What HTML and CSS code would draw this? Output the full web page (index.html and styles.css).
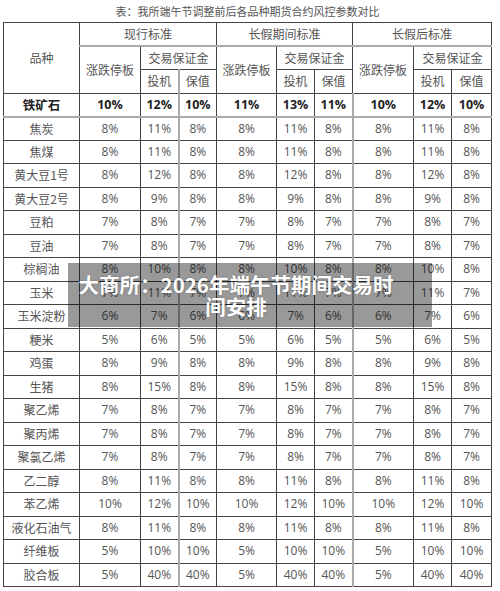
FILE: index.html
```html
<!DOCTYPE html>
<html lang="zh">

<head>
  <meta charset="UTF-8">
  <meta name="viewport" content="width=device-width, initial-scale=1.0">
  <title>风控参数对比</title>
  <link rel="stylesheet" href="styles.css">
</head>

<body>
  <div class="page">
    <div class="caption">表：我所端午节调整前后各品种期货合约风控参数对比</div>
    <table class="params">
      <colgroup>
        <col class="c-name">
        <col class="c-limit">
        <col class="c-m">
        <col class="c-m2">
        <col class="c-limit2">
        <col class="c-m">
        <col class="c-m2">
        <col class="c-limit">
        <col class="c-m">
        <col class="c-m3">
      </colgroup>
      <thead>
        <tr>
          <td rowspan="3">品种</td>
          <td colspan="3" class="grp">现行标准</td>
          <td colspan="3" class="grp">长假期间标准</td>
          <td colspan="3" class="grp">长假后标准</td>
        </tr>
        <tr>
          <td rowspan="2">涨跌停板</td>
          <td colspan="2">交易保证金</td>
          <td rowspan="2">涨跌停板</td>
          <td colspan="2">交易保证金</td>
          <td rowspan="2">涨跌停板</td>
          <td colspan="2">交易保证金</td>
        </tr>
        <tr>
          <td>投机</td><td class="gl">保值</td>
          <td>投机</td><td>保值</td>
          <td>投机</td><td class="gl-thin">保值</td>
        </tr>
      </thead>
      <tbody>
        <tr class="bold"><td>铁矿石</td><td>10%</td><td>12%</td><td>10%</td><td>11%</td><td>13%</td><td>11%</td><td>10%</td><td>12%</td><td>10%</td></tr>
        <tr><td>焦炭</td><td>8%</td><td>11%</td><td>8%</td><td>8%</td><td>11%</td><td>8%</td><td>8%</td><td>11%</td><td>8%</td></tr>
        <tr><td>焦煤</td><td>8%</td><td>11%</td><td>8%</td><td>8%</td><td>11%</td><td>8%</td><td>8%</td><td>11%</td><td>8%</td></tr>
        <tr><td>黄大豆1号</td><td>8%</td><td>12%</td><td>8%</td><td>8%</td><td>12%</td><td>8%</td><td>8%</td><td>12%</td><td>8%</td></tr>
        <tr><td>黄大豆2号</td><td>8%</td><td>9%</td><td>8%</td><td>8%</td><td>9%</td><td>8%</td><td>8%</td><td>9%</td><td>8%</td></tr>
        <tr><td>豆粕</td><td>7%</td><td>8%</td><td>7%</td><td>7%</td><td>8%</td><td>7%</td><td>7%</td><td>8%</td><td>7%</td></tr>
        <tr><td>豆油</td><td>7%</td><td>8%</td><td>7%</td><td>7%</td><td>8%</td><td>7%</td><td>7%</td><td>8%</td><td>7%</td></tr>
        <tr><td>棕榈油</td><td>8%</td><td>10%</td><td>8%</td><td>8%</td><td>10%</td><td>8%</td><td>8%</td><td>10%</td><td>8%</td></tr>
        <tr><td>玉米</td><td>7%</td><td>11%</td><td>7%</td><td>7%</td><td>11%</td><td>7%</td><td>7%</td><td>11%</td><td>7%</td></tr>
        <tr><td>玉米淀粉</td><td>6%</td><td>7%</td><td>6%</td><td>6%</td><td>7%</td><td>6%</td><td>6%</td><td>7%</td><td>6%</td></tr>
        <tr><td>粳米</td><td>5%</td><td>6%</td><td>5%</td><td>5%</td><td>6%</td><td>5%</td><td>5%</td><td>6%</td><td>5%</td></tr>
        <tr><td>鸡蛋</td><td>8%</td><td>9%</td><td>8%</td><td>8%</td><td>9%</td><td>8%</td><td>8%</td><td>9%</td><td>8%</td></tr>
        <tr><td>生猪</td><td>8%</td><td>15%</td><td>8%</td><td>8%</td><td>15%</td><td>8%</td><td>8%</td><td>15%</td><td>8%</td></tr>
        <tr><td>聚乙烯</td><td>7%</td><td>8%</td><td>7%</td><td>7%</td><td>8%</td><td>7%</td><td>7%</td><td>8%</td><td>7%</td></tr>
        <tr><td>聚丙烯</td><td>7%</td><td>8%</td><td>7%</td><td>7%</td><td>8%</td><td>7%</td><td>7%</td><td>8%</td><td>7%</td></tr>
        <tr><td>聚氯乙烯</td><td>7%</td><td>8%</td><td>7%</td><td>7%</td><td>8%</td><td>7%</td><td>7%</td><td>8%</td><td>7%</td></tr>
        <tr><td>乙二醇</td><td>8%</td><td>11%</td><td>8%</td><td>8%</td><td>11%</td><td>8%</td><td>8%</td><td>11%</td><td>8%</td></tr>
        <tr><td>苯乙烯</td><td>10%</td><td>12%</td><td>10%</td><td>10%</td><td>12%</td><td>10%</td><td>10%</td><td>12%</td><td>10%</td></tr>
        <tr><td>液化石油气</td><td>8%</td><td>11%</td><td>8%</td><td>8%</td><td>11%</td><td>8%</td><td>8%</td><td>11%</td><td>8%</td></tr>
        <tr><td>纤维板</td><td>5%</td><td>10%</td><td>10%</td><td>5%</td><td>10%</td><td>10%</td><td>5%</td><td>10%</td><td>10%</td></tr>
        <tr><td>胶合板</td><td>5%</td><td>40%</td><td>40%</td><td>5%</td><td>40%</td><td>40%</td><td>5%</td><td>40%</td><td>40%</td></tr>
      </tbody>
    </table>

    <div class="banner">大商所：2026年端午节期间交易时<br>间安排</div>
  </div>
</body>

</html>
```

FILE: styles.css
```css
* {
  box-sizing: border-box;
}

body {
  margin: 0;
  background-color: #fff;
  font-family: "Open Sans", "Noto Sans CJK SC", sans-serif;
  color: #555;
}

.page {
  position: relative;
  width: 500px;
  padding-left: 3px;
}

.caption {
  height: 22px;
  line-height: 22px;
  width: 489px;
  text-align: center;
  font-family: "Noto Sans CJK SC", sans-serif;
  font-size: 11px;
  color: #555;
}

.params {
  width: 489px;
  border-collapse: collapse;
  table-layout: fixed;
  border: 1px solid #333;
}

.c-name { width: 76px; }
.c-limit { width: 61px; }
.c-limit2 { width: 60px; }
.c-m { width: 38px; }
.c-m2 { width: 38px; }
.c-m3 { width: 40px; }

.params tr {
  height: 23.5px;
}

.params td {
  padding: 0;
  border: 1px solid #444;
  text-align: center;
  vertical-align: middle;
  font-size: 12px;
  line-height: 14px;
  color: #555;
  white-space: nowrap;
  overflow: hidden;
}

.params thead td {
  font-family: "Noto Sans CJK SC", sans-serif;
}

.params thead td.grp {
  border-bottom: 2px solid #aaa;
}

.params thead td.gl {
  border-left: 2px solid #aaa;
}

.params thead td.gl-thin {
  border-left: 1px solid #999;
}

.params tbody td:first-child {
  font-family: "Noto Sans CJK SC", sans-serif;
}

.params tbody td:nth-child(4),
.params tbody td:nth-child(8) {
  border-left: 2px solid #aaa;
}

.params tbody td:nth-child(10) {
  border-left: 1px solid #999;
}

.params tr.bold td {
  font-weight: bold;
  color: #222;
  font-size: 12.5px;
  border-bottom: 2px solid #aaa;
}

.banner {
  position: absolute;
  left: 68px;
  top: 263px;
  width: 364px;
  height: 64px;
  padding: 10px 28px 10px 0;
  background-color: rgba(0, 0, 0, 0.4);
  color: #fff;
  font-family: "Noto Sans CJK SC", sans-serif;
  font-weight: bold;
  font-size: 20.5px;
  line-height: 22px;
  text-align: center;
  text-shadow: 0 0 2px rgba(0, 0, 0, 0.3);
}
```
